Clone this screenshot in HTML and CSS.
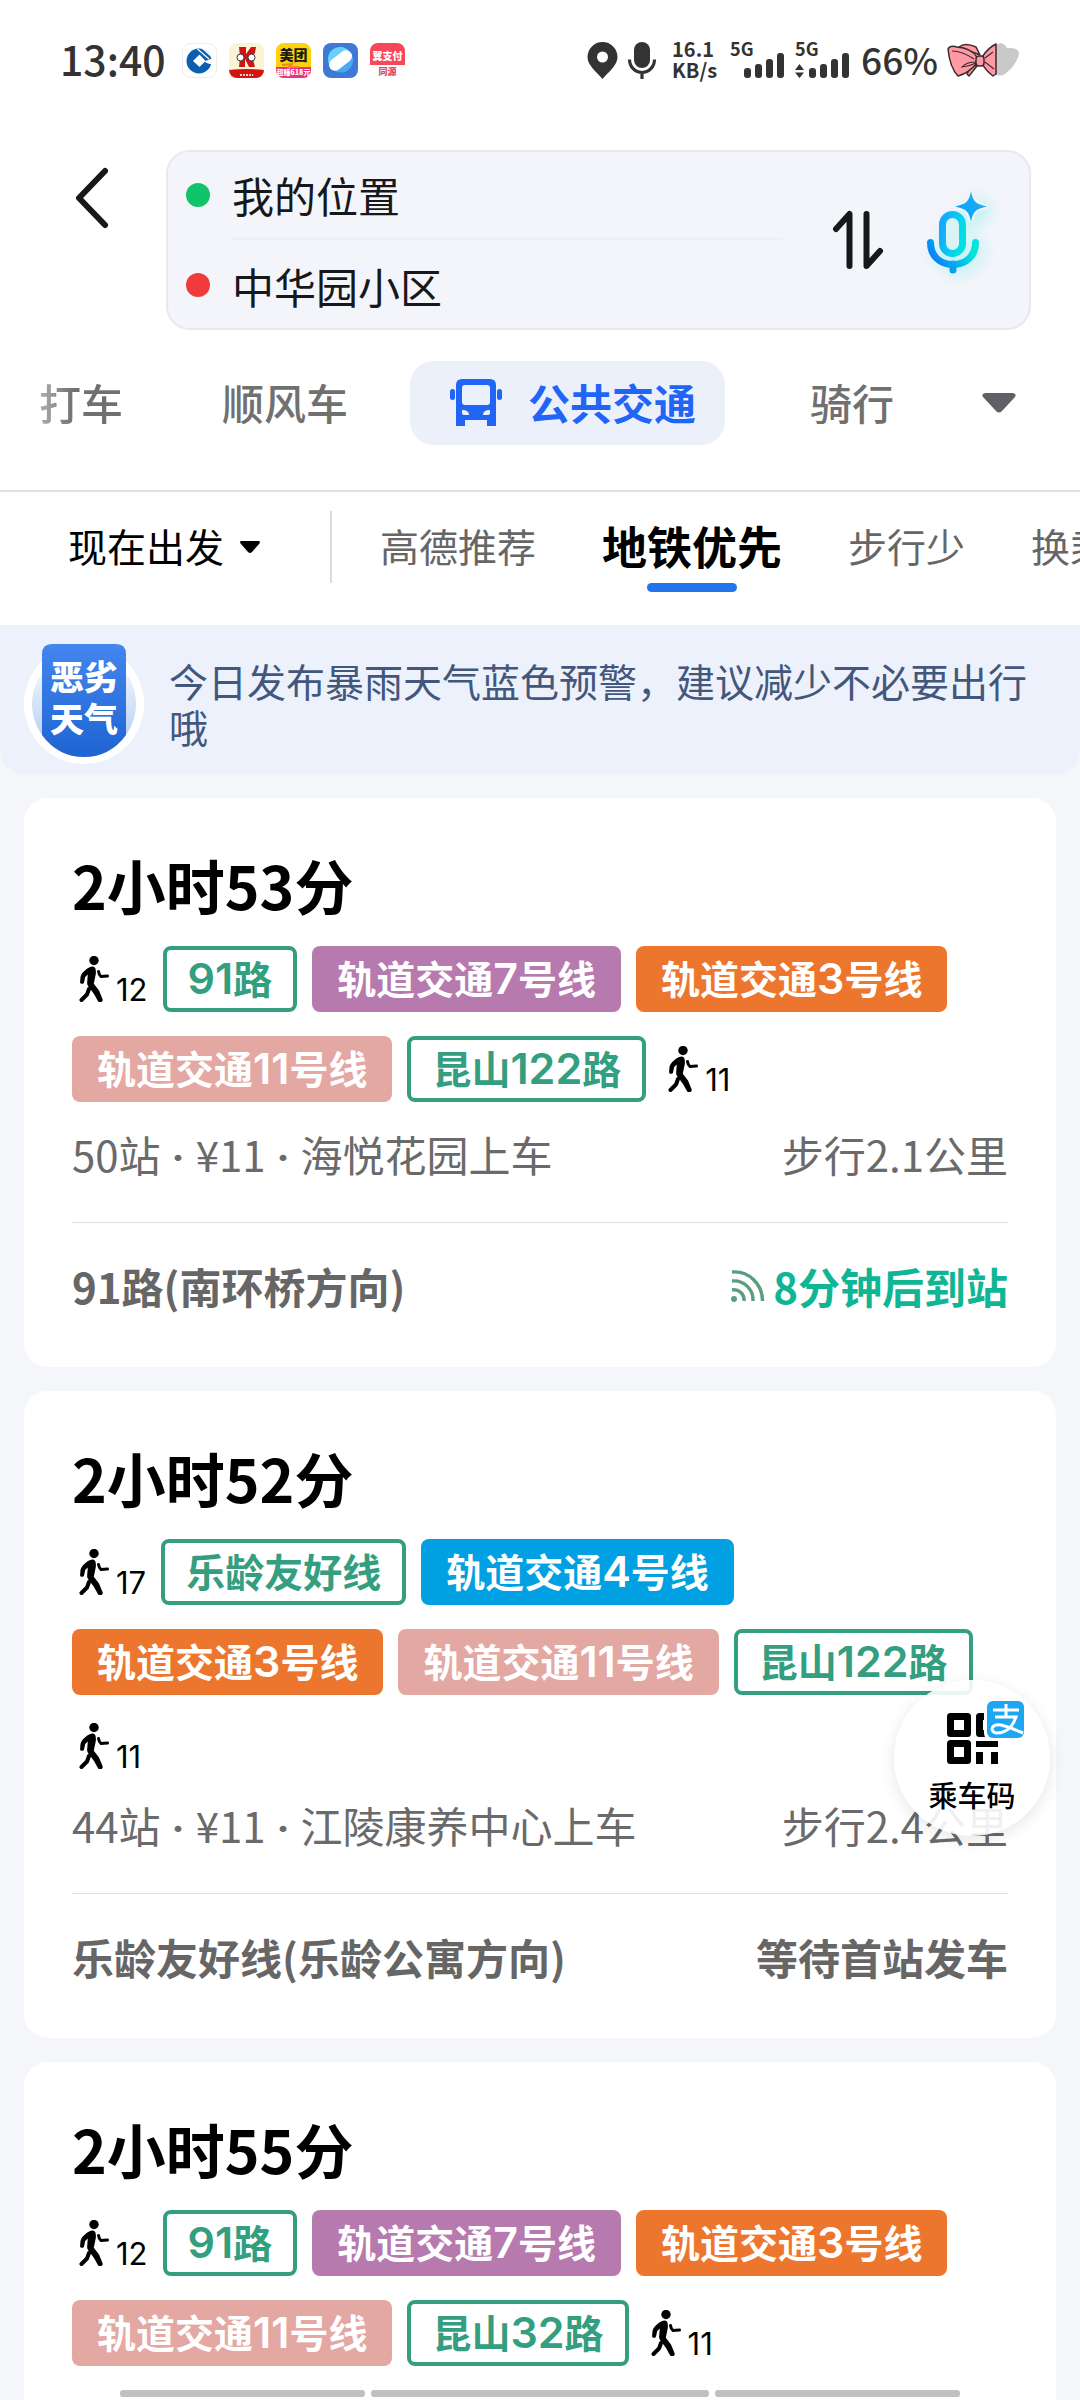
FILE: index.html
```html
<!DOCTYPE html>
<html lang="zh-CN">
<head>
<meta charset="utf-8">
<meta name="viewport" content="width=device-width, initial-scale=1">
<title>公共交通路线</title>
<link rel="stylesheet" href="styles.css">
</head>
<body>
<svg class="defs" aria-hidden="true">
  <symbol id="walk" viewBox="0 0 30 46">
    <circle cx="15" cy="4.500" r="4.700"/>
    <path d="M14 10.500c-3 0-5 1.500-7.500 3.500-3 2.500-4.500 4.500-5 7l-.4 5c-.2 2 3.300 2.600 3.900.4l1.200-5.400 2.600-2.600-.6 7.600c-.2 2 .2 3.400 1.600 5l5.200 7 4.200 7.400c1.600 2 5.200.4 4.400-2.200l-3.600-8.600-5.200-6.800 2-9.800c.4-4.400-.4-7.400-2.800-7.500z"/>
    <path d="M19.500 15.500c.3 2 1 4 2.500 5l6.500-.4" fill="none" stroke="currentColor" stroke-width="3" stroke-linecap="round" stroke-linejoin="round"/>
    <path d="M10 33l-2 5.500-5.500 5.500" fill="none" stroke="currentColor" stroke-width="4" stroke-linecap="round" stroke-linejoin="round"/>
  </symbol>
</svg>

<div class="app">
  <header class="status">
    <time class="clock">13:40</time>
    <div class="notices">
      <svg class="app-icon" viewBox="0 0 35 35"><rect x=".5" y=".5" width="34" height="34" rx="8" fill="#fff" stroke="#ececec"/><circle cx="17" cy="18" r="12.500" fill="#0b5fae"/><path d="M17.500 11.500l6 6.500-6 6-6.500-6z" fill="#fff"/><path d="M22 18.500l8-3v6l-4-1z" fill="#fff"/><path d="M19 4l10 9M15.500 6L27 16" stroke="#fff" stroke-width="1.200"/></svg>
      <svg class="app-icon" viewBox="0 0 35 35"><clipPath id="c1"><rect width="35" height="35" rx="8"/></clipPath><g clip-path="url(#c1)"><rect width="35" height="35" fill="#fbf3d6"/><path d="M0 27q17-2 35 0v8H0z" fill="#d5140f"/><path d="M10 4h7v7l5-7h5l-1 6-3 3 3 11h-6l-4-8v8h-6l1-10z" fill="#cf1414"/><circle cx="11.500" cy="14.500" r="3.500" fill="#fff" stroke="#333"/><circle cx="22.500" cy="14.500" r="3.500" fill="#fff" stroke="#333"/><path d="M11 32h13" stroke="#f6c9b8" stroke-width="2" stroke-dasharray="2 1"/></g></svg>
      <svg class="app-icon" viewBox="0 0 35 35"><clipPath id="c2"><rect width="35" height="35" rx="8"/></clipPath><g clip-path="url(#c2)"><rect width="35" height="35" fill="#fbd20b"/><path d="M0 24h35v11H0z" fill="#e83480"/><path d="M6 22l10-1-3 3h10" fill="none" stroke="#f08a1c" stroke-width="2"/><text class="icon-text" x="17.500" y="17" font-size="14" fill="#1c1a12">美团</text><text class="icon-text" x="17.500" y="32" font-size="7" fill="#fff">超赚618元</text></g></svg>
      <svg class="app-icon" viewBox="0 0 35 35"><rect width="35" height="35" rx="8" fill="#3f79d6"/><circle cx="18" cy="17.500" r="12" fill="#4aa8f4"/><path d="M8 24A12 12 0 0 1 26 8z" fill="#6ad0fa"/><rect x="4.500" y="11.500" width="26" height="12" rx="6" fill="#fff" transform="rotate(-38 17.500 17.500)"/></svg>
      <svg class="app-icon" viewBox="0 0 35 35"><clipPath id="c3"><rect width="35" height="35" rx="8"/></clipPath><g clip-path="url(#c3)"><rect width="35" height="35" fill="#fff"/><path d="M0 0h35v22H0z" fill="#f8475a"/><text class="icon-text" x="17.500" y="17" font-size="10" fill="#fff">翼支付</text><text class="icon-text" x="17.500" y="32" font-size="9" fill="#e0485a">同源</text></g></svg>
    </div>
    <div class="system">
      <svg width="31" height="37" viewBox="0 0 31 37"><path d="M15.500 0A15 15 0 0 0 .5 15c0 8 8 14 15 22 7-8 15-14 15-22a15 15 0 0 0-15-15z" fill="#333"/><circle cx="15.500" cy="15" r="5.500" fill="#fff"/></svg>
      <svg class="sys-mic" width="28" height="37" viewBox="0 0 28 37"><rect x="6" y="0" width="16" height="26" rx="8" fill="#333"/><path d="M1.500 17.500a12.500 13 0 0 0 25 0M14 31v6" fill="none" stroke="#333" stroke-width="3.200"/></svg>
      <div class="rate"><span>16.1</span><span>KB/s</span></div>
      <div class="signal"><span>5G</span><svg width="54" height="25" viewBox="0 0 54 25"><g fill="#333"><rect x="14" y="15" width="7" height="10" rx="3"/><rect x="25" y="11" width="7" height="14" rx="3"/><rect x="36" y="6" width="7" height="19" rx="3"/><rect x="47" y="0" width="7" height="25" rx="3"/></g></svg></div>
      <div class="signal"><span>5G</span><svg width="54" height="25" viewBox="0 0 54 25"><g fill="#333"><path d="M0 17l4.500-6L9 17zM0 19.500h9L4.500 25z"/><rect x="14" y="15" width="7" height="10" rx="3"/><rect x="25" y="11" width="7" height="14" rx="3"/><rect x="36" y="6" width="7" height="19" rx="3"/><rect x="47" y="0" width="7" height="25" rx="3"/></g></svg></div>
      <span class="battery">66%</span>
      <svg width="72" height="35" viewBox="0 0 72 35"><path d="M48 2l6-2q4 1 6 5 12-1 12 6-3 12-14 20-6 3-10 0z" fill="#c9c9c9"/><g fill="#ff9aa5" stroke="#3a2a2e" stroke-width="1.500" stroke-linejoin="round"><path d="M25 22l-5 9 2 2 8-10zM12 4q6-5 17 0l4 8z"/><path d="M1 6q2-4 9-2 14 1 20 10v6q-8 10-19 13Q3 25 1 6z"/><path d="M35 14Q42 4 49 1v30l-3 2q-8-6-11-13z"/><rect x="29" y="13" width="8" height="10" rx="3"/></g><path d="M5 8q10 0 22 8M29 19q-10 0-14 5 8-1 14-4M38 15l8-6M38 19l9 7" fill="none" stroke="#3a2a2e" stroke-width="1.100"/></svg>
    </div>
  </header>

  <section class="planner">
    <button class="back" aria-label="返回"><svg width="34" height="62" viewBox="0 0 34 62"><path d="M30 4L4 31l26 27" fill="none" stroke="#17181a" stroke-width="6" stroke-linecap="round" stroke-linejoin="round"/></svg></button>
    <form class="endpoints">
      <div class="fields">
        <label class="field"><span class="dot dot--from"></span><input type="text" value="我的位置" aria-label="起点"></label>
        <label class="field"><span class="dot dot--to"></span><input type="text" value="中华园小区" aria-label="终点"></label>
      </div>
      <button type="button" class="swap" aria-label="交换起终点"><svg width="50" height="60" viewBox="0 0 50 60"><path d="M3 19L16.500 4v52M33.500 4v52L47 41" fill="none" stroke="#17181a" stroke-width="6" stroke-linecap="round" stroke-linejoin="round"/></svg></button>
      <button type="button" class="voice" aria-label="语音输入"><svg width="60" height="84" viewBox="0 0 60 84"><defs><linearGradient id="vg" x1="0" y1="1" x2="1" y2="0.600"><stop offset="0" stop-color="#0a6cff"/><stop offset="1" stop-color="#00e5dc"/></linearGradient><linearGradient id="vs" x1="0" y1="1" x2="1" y2="0"><stop offset="0" stop-color="#00a2ff"/><stop offset=".6" stop-color="#17a9f5"/><stop offset="1" stop-color="#10d8d0"/></linearGradient><linearGradient id="vm" x1="0" y1="0" x2="1" y2=".5"><stop offset="0" stop-color="#19a4ff"/><stop offset="1" stop-color="#00e0e6"/></linearGradient></defs><rect x="15.500" y="22.500" width="20" height="39" rx="10" fill="none" stroke="url(#vm)" stroke-width="7"/><path d="M3.500 50.500c0 13 9 22 22.500 22s22.500-9 22.500-22M26 72v6" fill="none" stroke="url(#vg)" stroke-width="7" stroke-linecap="round"/><path class="spark" d="M44-1c2 11 5 13 16 15.500C49 17 46 19 44 30c-2-11-5-13-16-15.500C39 12 42 10 44-1z" fill="url(#vs)"/></svg></button>
    </form>
  </section>

  <div class="modes">
    <nav class="tabs" aria-label="出行方式">
      <button class="tab tab--cut">打车</button>
      <button class="tab">顺风车</button>
      <button class="tab tab--active"><svg width="52" height="47" viewBox="0 0 52 47"><g fill="#2165f6"><path d="M12 0h28q6 0 6 6v41h-9v-6H15v6H6V6q0-6 6-6z"/><rect x="0" y="10" width="5" height="11" rx="2.500"/><rect x="47" y="10" width="5" height="11" rx="2.500"/></g><rect x="12" y="6" width="28" height="20" rx="3" fill="#ecf0fb"/><path d="M12 31q7 0 7 5h-5q-2 0-2-2zM40 31q-7 0-7 5h5q2 0 2-2z" fill="#ecf0fb"/></svg>公共交通</button>
      <button class="tab tab--far">骑行</button>
    </nav>
    <button class="more" aria-label="更多方式"><svg width="34" height="20" viewBox="0 0 34 20"><path d="M3 0h28q4 1 2 4L20 18q-3 3-6 0L1 4Q-1 1 3 0z" fill="#606167"/></svg></button>
  </div>

  <div class="filters">
    <button class="depart">现在出发<svg width="20" height="12" viewBox="0 0 20 12"><path d="M1 0h18q2 1 0 3l-7 8q-2 2-4 0L1 3Q-1 1 1 0z"/></svg></button>
    <nav class="sorts" aria-label="排序">
      <button class="sort">高德推荐</button>
      <button class="sort sort--active">地铁优先</button>
      <button class="sort">步行少</button>
      <button class="sort">换乘少</button>
    </nav>
  </div>

  <main class="results">
    <aside class="alert">
      <svg class="alert-badge" width="120" height="120" viewBox="0 0 120 120"><defs><linearGradient id="ab" x1="0" y1="0" x2="0" y2="1"><stop offset="0" stop-color="#4386ee"/><stop offset="1" stop-color="#1f64d2"/></linearGradient><linearGradient id="ar" x1="0" y1="0" x2="0" y2="1"><stop offset="0" stop-color="#fff"/><stop offset="1" stop-color="#a9c6f1"/></linearGradient></defs><circle cx="60" cy="60" r="60" fill="#fff"/><circle cx="60" cy="60" r="52" fill="url(#ar)"/><path d="M28 0h64q10 0 10 10v81q-16 22-42 22T18 91V10Q18 0 28 0z" fill="url(#ab)"/><text class="icon-text" x="60" y="46" font-size="34" fill="#fff">恶劣</text><text class="icon-text" x="60" y="88" font-size="34" fill="#fff">天气</text></svg>
      <p>今日发布暴雨天气蓝色预警，建议减少不必要出行哦</p>
    </aside>

    <article class="card">
      <h2>2小时53分</h2>
      <div class="legs">
        <span class="walk"><svg><use href="#walk"/></svg>12</span>
        <span class="line line--bus"><b>91</b>路</span>
        <span class="line line--7">轨道交通<b>7</b>号线</span>
        <span class="line line--3">轨道交通<b>3</b>号线</span>
        <span class="line line--11">轨道交通<b>11</b>号线</span>
        <span class="line line--bus">昆山<b>122</b>路</span>
        <span class="walk"><svg><use href="#walk"/></svg>11</span>
      </div>
      <div class="info"><span>50站<i class="sep">·</i>¥11<i class="sep">·</i>海悦花园上车</span><span>步行2.1公里</span></div>
      <div class="next"><span>91路(南环桥方向)</span><span class="live"><svg width="34" height="32" viewBox="0 0 34 32"><circle cx="3" cy="29" r="3" fill="#5a9e80"/><path d="M1 20a10 10 0 0 1 12 11M1 11a19 19 0 0 1 21 20M1 2a28 29 0 0 1 30.500 29" fill="none" stroke="#5a9e80" stroke-width="3.400"/></svg>8分钟后到站</span></div>
    </article>

    <article class="card">
      <h2>2小时52分</h2>
      <div class="legs">
        <span class="walk"><svg><use href="#walk"/></svg>17</span>
        <span class="line line--bus">乐龄友好线</span>
        <span class="line line--4">轨道交通<b>4</b>号线</span>
        <span class="line line--3">轨道交通<b>3</b>号线</span>
        <span class="line line--11">轨道交通<b>11</b>号线</span>
        <span class="line line--bus">昆山<b>122</b>路</span>
        <span class="walk"><svg><use href="#walk"/></svg>11</span>
      </div>
      <div class="info"><span>44站<i class="sep">·</i>¥11<i class="sep">·</i>江陵康养中心上车</span><span>步行2.4公里</span></div>
      <div class="next"><span>乐龄友好线(乐龄公寓方向)</span><span>等待首站发车</span></div>
    </article>

    <article class="card">
      <h2>2小时55分</h2>
      <div class="legs">
        <span class="walk"><svg><use href="#walk"/></svg>12</span>
        <span class="line line--bus"><b>91</b>路</span>
        <span class="line line--7">轨道交通<b>7</b>号线</span>
        <span class="line line--3">轨道交通<b>3</b>号线</span>
        <span class="line line--11">轨道交通<b>11</b>号线</span>
        <span class="line line--bus">昆山<b>32</b>路</span>
        <span class="walk"><svg><use href="#walk"/></svg>11</span>
      </div>
      <div class="info"><span>48站<i class="sep">·</i>¥11<i class="sep">·</i>海悦花园上车</span></div>
    </article>
  </main>

  <button class="ride-code">
    <svg width="80" height="64" viewBox="0 0 80 64"><g fill="none" stroke="#000" stroke-width="7" stroke-linejoin="round"><rect x="5.500" y="16.500" width="17" height="17"/><rect x="5.500" y="43.500" width="17" height="17"/><path d="M50 16.500H34.500v17H50"/></g><path d="M31 41h22v6H31zM31 52h7v12h-7zM46 52h7v12h-7z"/><rect x="39" y="-2" width="43" height="43" rx="8" fill="#fff"/><rect x="42" y="1" width="37" height="37" rx="6" fill="#1da7f2"/><g fill="none" stroke="#fff" stroke-width="3"><path d="M48 10h26M61 4v13M50 17h21q-4 12-13 15-10 3-11-3 1-5 9-4 8 2 22 8"/></g></svg>
    乘车码
  </button>

  <div class="gesture-bar"><i></i><i class="mid"></i><i></i></div>
</div>
</body>
</html>
```

FILE: styles.css
```css
* {
  box-sizing: border-box;
}

body {
  margin: 0;
  background: #f4f6f9;
  color: #000;
  font-family: "Noto Sans CJK SC", sans-serif;
}

button,
input {
  margin: 0;
  padding: 0;
  border: 0;
  background: none;
  color: inherit;
  font: inherit;
}

button {
  flex: none;
  white-space: nowrap;
  cursor: pointer;
}

svg {
  display: block;
  flex: none;
  overflow: visible;
}

.defs {
  position: absolute;
  width: 0;
  height: 0;
}

.icon-text {
  font-weight: 900;
  text-anchor: middle;
}

.app {
  position: relative;
  display: flex;
  flex-direction: column;
  height: 100vh;
  overflow: hidden;
}

/* Status bar */
.status {
  display: flex;
  flex: none;
  align-items: center;
  height: 120px;
  padding: 0 61px 0 60px;
  background: #fff;
  color: #333;
}

.clock {
  padding-bottom: 4px;
  font-size: 41px;
  font-weight: 500;
}

.notices {
  display: flex;
  gap: 12px;
  margin-left: 16px;
}

.app-icon {
  width: 35px;
  height: 35px;
}

.system {
  display: flex;
  align-items: center;
  margin-left: auto;
}

.sys-mic {
  margin-left: 10px;
}

.rate {
  display: flex;
  flex-direction: column;
  width: 42px;
  margin-left: 16px;
  padding-bottom: 2px;
  font-size: 20px;
  font-weight: 700;
  line-height: 21px;
}

.signal {
  display: flex;
  flex-direction: column;
  margin-left: 16px;
  font-size: 18px;
  font-weight: 700;
  line-height: 13px;
}

.signal svg {
  margin-top: -2px;
}

.signal + .signal {
  margin-left: 11px;
}

.battery {
  margin: 0 9px 0 12px;
  padding-bottom: 2px;
  font-size: 37px;
  font-weight: 500;
}

/* Origin and destination */
.planner {
  display: flex;
  flex: none;
  padding: 30px 49px 0 0;
  background: #fff;
}

.back {
  display: flex;
  align-items: flex-start;
  width: 166px;
  padding: 17px 0 0 75px;
}

.endpoints {
  display: flex;
  flex: 1;
  align-items: center;
  height: 180px;
  padding: 0 42px 0 18px;
  border: 2px solid #e8e9ed;
  border-radius: 24px;
  background: #f4f5fa;
}

.fields {
  flex: 1;
}

.field {
  display: flex;
  align-items: center;
  gap: 22px;
  height: 90px;
}

.field input {
  flex: 1;
  min-width: 0;
  height: 89px;
  color: #17181a;
  font-size: 42px;
}

.field:first-child input {
  border-bottom: 2px solid #eeeff3;
}

.dot {
  width: 24px;
  height: 24px;
  border-radius: 50%;
}

.dot--from {
  background: #10c46a;
}

.dot--to {
  background: #f03b3b;
}

.swap {
  margin-left: 50px;
}

.voice {
  margin: 0 0 12px 44px;
  filter: drop-shadow(6px 4px 8px #00e5dc44);
}

.spark {
  stroke: #f4f5fa;
  stroke-width: 4px;
  paint-order: stroke;
}

/* Travel modes */
.modes {
  display: flex;
  flex: none;
  align-items: center;
  justify-content: space-between;
  padding: 31px 64px 45px 2px;
  border-bottom: 2px solid #dfdfdf;
  background: #fff;
}

.tabs {
  display: flex;
  gap: 25px;
}

.tab {
  display: flex;
  align-items: center;
  height: 84px;
  padding: 0 37px 4px;
  color: #707070;
  font-size: 42px;
  font-weight: 500;
}

.tab--cut {
  background: linear-gradient(90deg, #b0b0b0 36px, #707070 72px);
  background-clip: text;
  color: transparent;
}

.tab--active {
  gap: 26px;
  padding: 0 29px 4px 40px;
  border-radius: 24px;
  background: #ecf0fb;
  color: #2165f6;
  font-weight: 700;
}

.tab--active svg {
  margin-top: 2px;
}

.tab--far {
  margin-left: 23px;
}

/* Departure time and sorting */
.filters {
  display: flex;
  flex: none;
  padding: 19px 0 42px 68px;
  overflow: hidden;
  background: #fff;
  font-size: 39px;
}

.depart {
  display: flex;
  align-items: center;
  gap: 16px;
  height: 72px;
  padding: 0 70px 4px 0;
  border-right: 2px solid #dcdcdc;
}

.depart svg {
  margin-top: 4px;
}

.sorts {
  display: flex;
  gap: 66px;
  margin-left: 48px;
}

.sort {
  position: relative;
  height: 72px;
  padding-bottom: 4px;
  color: #666;
}

.sort--active {
  color: #000;
  font-size: 45px;
  font-weight: 700;
}

.sort--active::after {
  position: absolute;
  top: 72px;
  left: calc(50% - 45px);
  width: 90px;
  height: 9px;
  border-radius: 5px;
  background: #2274ee;
  content: "";
}

/* Results */
.results {
  display: flex;
  flex: 1;
  flex-direction: column;
  gap: 24px;
  min-height: 0;
  overflow: hidden;
}

.alert {
  display: flex;
  flex: none;
  align-items: flex-start;
  gap: 25px;
  padding: 19px 48px 10px 24px;
  border-radius: 0 0 24px 24px;
  background: #ecf1fb;
  color: #43577d;
  font-size: 39px;
  line-height: 46px;
}

.alert p {
  margin: 13px 0 0;
}

.card {
  flex: none;
  margin: 0 24px;
  padding: 48px 48px;
  border-radius: 24px;
  background: #fff;
}

.card h2 {
  margin: 0 0 22px;
  font-size: 59px;
  font-weight: 700;
  line-height: 78px;
}

.legs {
  display: flex;
  flex-wrap: wrap;
  align-items: center;
  gap: 24px 15px;
}

.walk {
  display: flex;
  align-items: flex-end;
  gap: 7px;
  height: 54px;
  padding: 0 0 4px 7px;
  font-family: Inter, "Noto Sans CJK SC", sans-serif;
  font-size: 31px;
  line-height: 24px;
}

.walk svg {
  width: 30px;
  height: 46px;
}

.line {
  height: 66px;
  padding: 0 25px;
  border-radius: 8px;
  color: #fff;
  font-size: 39px;
  font-weight: 700;
  line-height: 63px;
}

.line b {
  font-family: Inter, "Noto Sans CJK SC", sans-serif;
  font-size: 43px;
  font-weight: 600;
  line-height: 1;
}

.line--bus {
  padding: 0 21px;
  border: 4px solid #349e80;
  color: #349e80;
  line-height: 55px;
}

.line--7 {
  background: #b67aae;
}

.line--3 {
  background: #ed762e;
}

.line--11 {
  background: #e4a8a3;
}

.line--4 {
  background: #00a0e2;
}

.info,
.next {
  display: flex;
  justify-content: space-between;
  font-size: 42px;
  line-height: 60px;
}

.info {
  margin-top: 22px;
  color: #6a6a6a;
}

.sep {
  display: inline-block;
  width: 35px;
  font-family: Roboto, sans-serif;
  font-style: normal;
  font-weight: 700;
  line-height: 1;
  text-align: center;
}

.next {
  margin: 38px 0 3px;
  padding-top: 33px;
  border-top: 1px solid #dedede;
  color: #666;
  font-weight: 700;
}

.live {
  display: flex;
  align-items: center;
  gap: 8px;
  color: #0fb594;
}

/* Floating ride code shortcut */
.ride-code {
  position: absolute;
  right: 30px;
  bottom: 564px;
  display: flex;
  flex-direction: column;
  align-items: center;
  gap: 8px;
  width: 156px;
  height: 156px;
  padding: 20px 0 0;
  border-radius: 50%;
  background: #ffffffe6;
  box-shadow: 0 4px 16px #0000001a;
  font-size: 29px;
  font-weight: 500;
  line-height: 44px;
}

.ride-code svg {
  margin-left: 25px;
}

/* Gesture indicator */
.gesture-bar {
  position: absolute;
  right: 120px;
  bottom: 3px;
  left: 120px;
  display: flex;
  gap: 6px;
}

.gesture-bar i {
  flex: 245;
  height: 7px;
  border-radius: 3px;
  background: #c1c1c1;
}

.gesture-bar .mid {
  flex: 338;
}
```
